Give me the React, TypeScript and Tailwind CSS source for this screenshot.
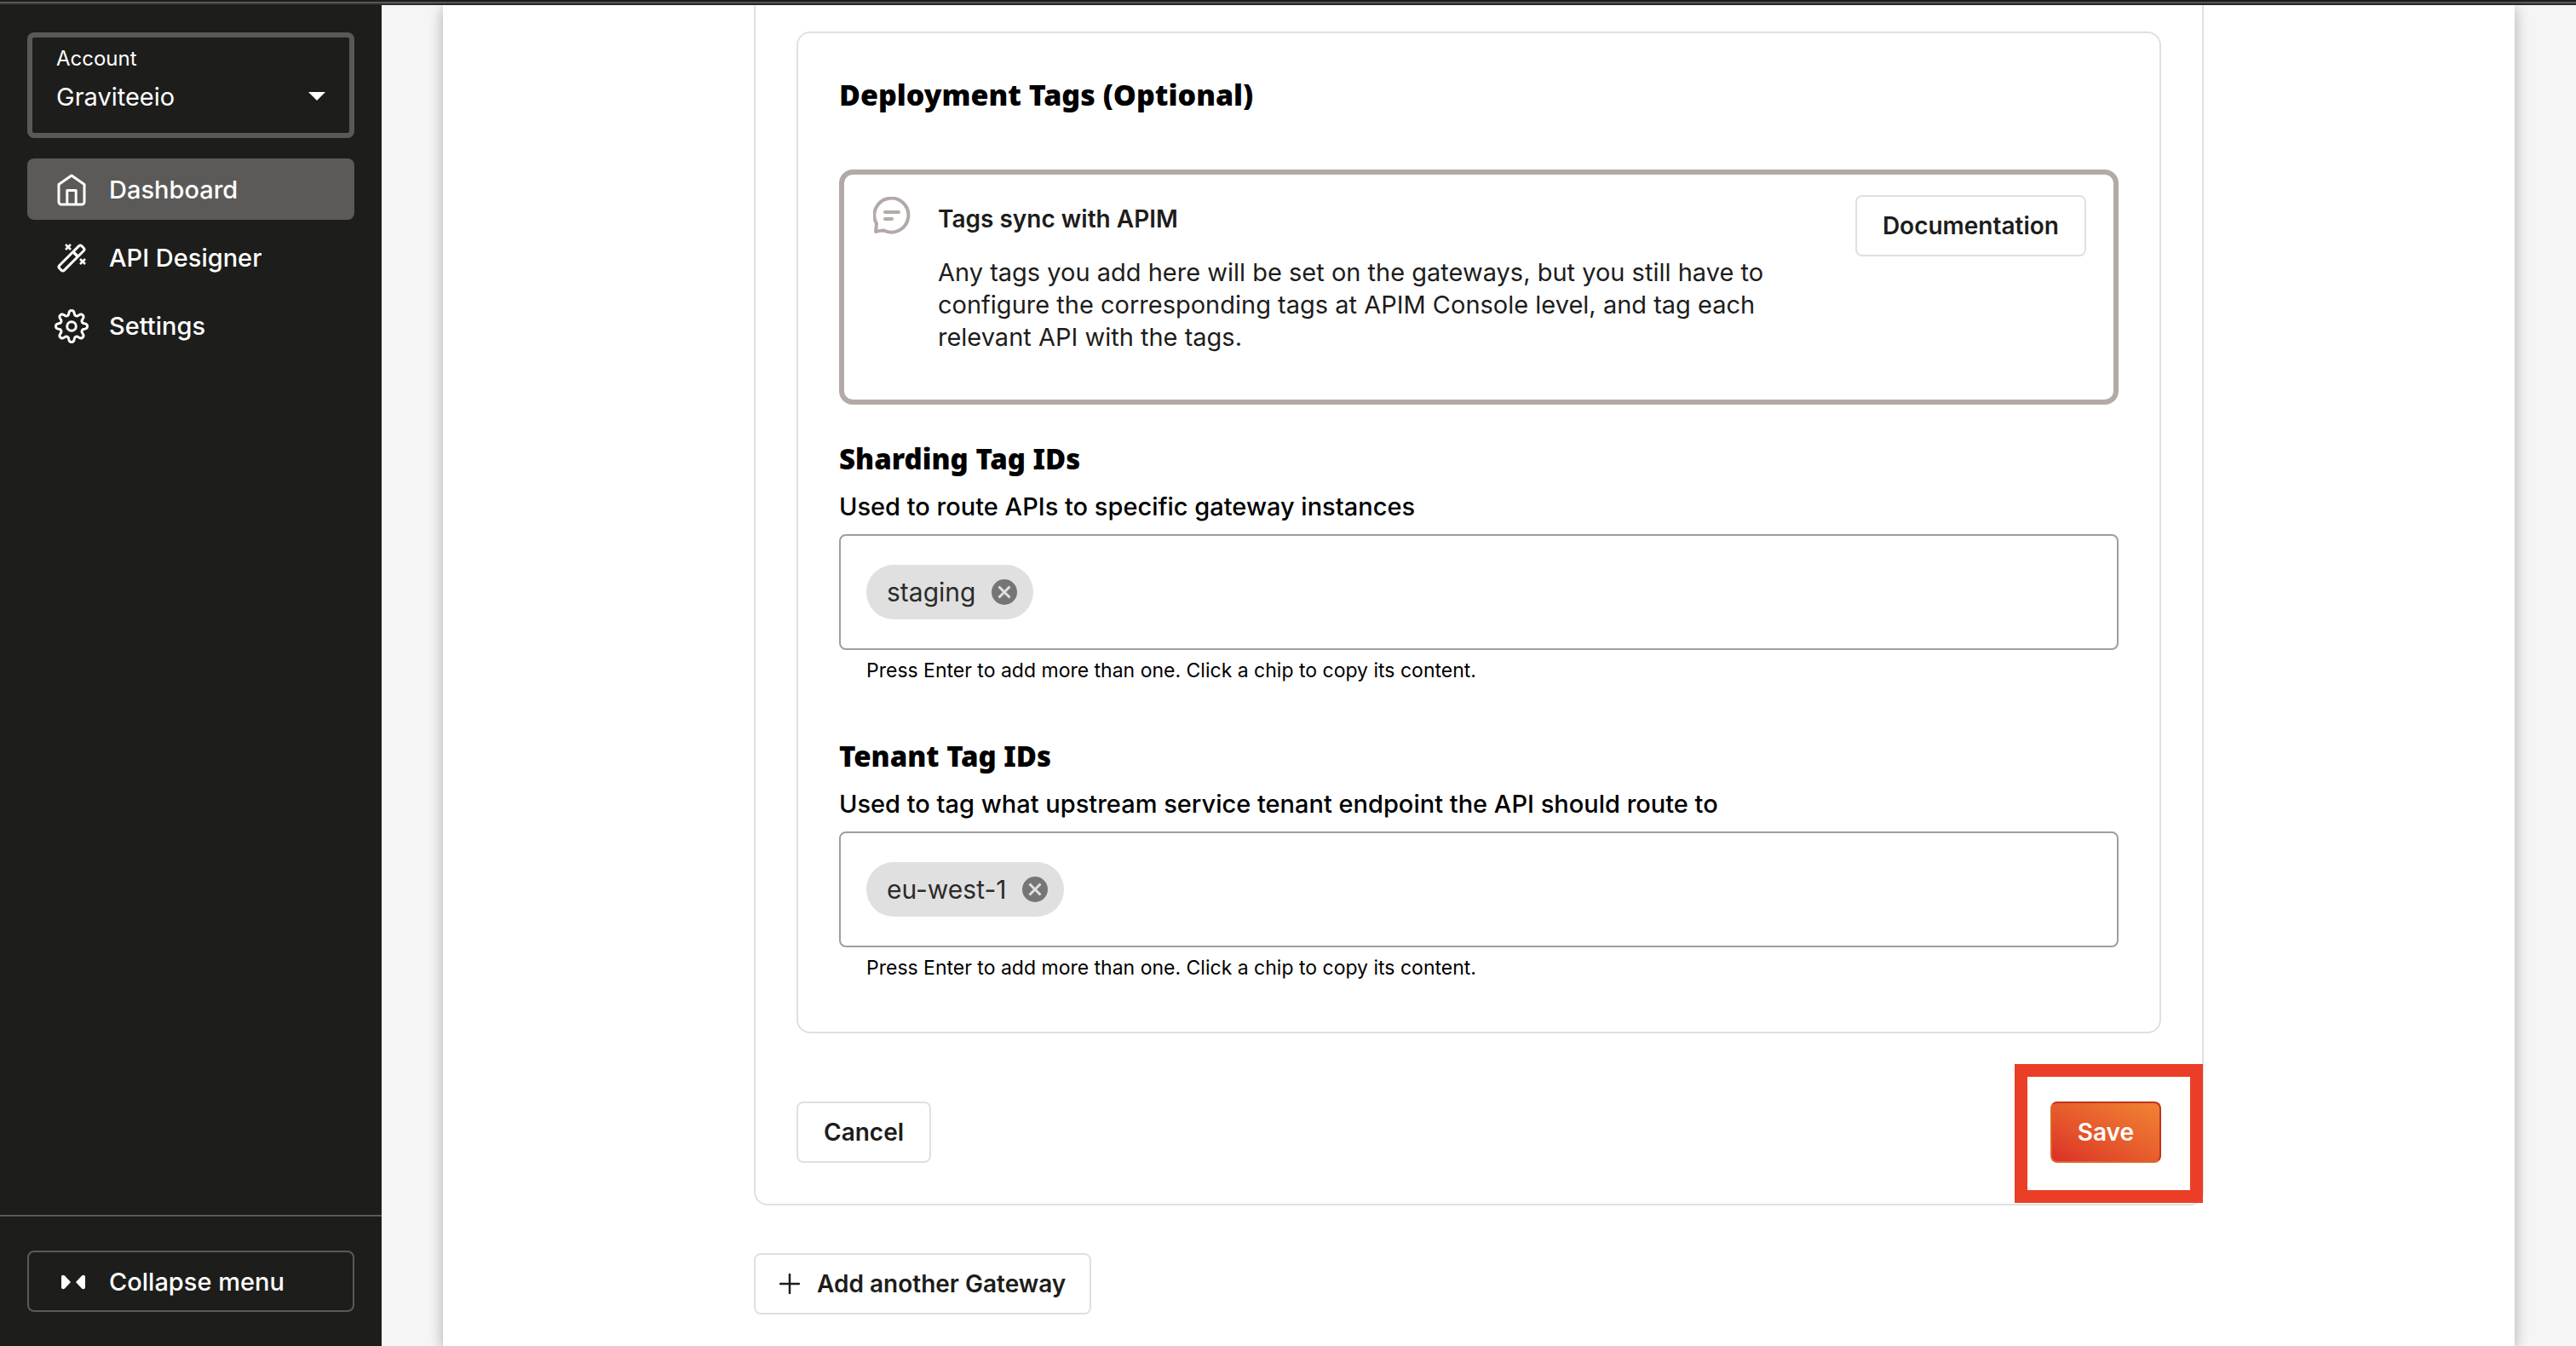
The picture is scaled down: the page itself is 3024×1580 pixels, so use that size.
import React from "react";

const navBase =
  "flex h-[72px] items-center gap-6 rounded-lg px-8 pt-0.5 text-[29px] font-medium text-white";

// Outline of an eight-lobed gear centred in a 40-unit box.
const gearPath =
  Array.from({ length: 160 }, (_, i) => {
    const a = (i / 160) * Math.PI * 2;
    const r = 15.9 + (2.6 * Math.tanh(1.5 * Math.cos(8 * a))) / Math.tanh(1.5);
    return `${i ? "L" : "M"}${(20 + r * Math.cos(a)).toFixed(2)} ${(20 + r * Math.sin(a)).toFixed(2)}`;
  }).join(" ") + " Z";

function HomeIcon() {
  return (
    <svg viewBox="0 0 40 40" className="size-10" fill="none" stroke="currentColor" strokeWidth="3" strokeLinejoin="round" aria-hidden="true">
      <path d="M5 13.500 L20 3 L35 13.500 V34 a3 3 0 0 1 -3 3 H8 a3 3 0 0 1 -3 -3 Z" />
      <path d="M14.800 37 V20.500 H25.200 V37" />
    </svg>
  );
}

function WandIcon() {
  return (
    <svg viewBox="0 0 40 40" className="size-10" fill="none" stroke="currentColor" strokeWidth="3" aria-hidden="true">
      <g transform="rotate(-45 20 20)">
        <rect x="1.500" y="16" width="37" height="8" rx="2.500" />
        <path strokeWidth="3.500" d="M26.500 16 V24" />
      </g>
      <path strokeWidth="2.500" d="M13 4 L19 10 M19 4 L13 10 M30 21 L36 27 M36 21 L30 27" />
    </svg>
  );
}

function GearIcon() {
  return (
    <svg viewBox="0 0 40 40" className="size-10" fill="none" stroke="currentColor" strokeWidth="3" strokeLinejoin="round" aria-hidden="true">
      <circle cx="20" cy="20" r="5.300" />
      <path d={gearPath} />
    </svg>
  );
}

function MessageIcon() {
  return (
    <svg viewBox="0 0 44 44" className="mt-0.5 size-11 shrink-0 text-[#b3aaa8]" fill="none" stroke="currentColor" strokeWidth="4" strokeLinecap="round" strokeLinejoin="round" aria-hidden="true">
      <path d="M3 41 L4 31.500 A20 20 0 1 1 12.500 39.500 Q8 39.500 3 41 Z" />
      <path d="M14 18 H30 M14 26 H22" />
    </svg>
  );
}

function OutlineButton({ children, className = "" }: { children: React.ReactNode; className?: string }) {
  return (
    <button type="button" className={`flex h-[72px] shrink-0 items-center rounded-lg border-2 border-[#e0e0e0] bg-white text-[28px] font-semibold text-[#1d1d1b] ${className}`}>
      {children}
    </button>
  );
}

function TagField({ id, title, description, chip }: { id: string; title: string; description: string; chip: string }) {
  return (
    <section>
      <h3 className="font-['Noto_Sans',sans-serif] text-[33px] leading-[48px] font-black">{title}</h3>
      <label htmlFor={id} className="mt-2 block text-[29px] leading-[48px] font-medium">{description}</label>
      <div className="mt-2 flex h-[136px] items-center gap-4 rounded-lg border-2 border-[#9e9e9e] px-[30px]">
        <span className="flex h-16 items-center gap-[18px] rounded-full bg-[#e0e0e0] pr-[18px] pl-6 text-[30px] text-[#2b2b2a]">
          {chip}
          <button type="button" aria-label={`Remove ${chip}`} className="flex size-8 items-center justify-center">
            <svg viewBox="0 0 32 32" className="size-8" aria-hidden="true">
              <circle cx="16" cy="16" r="15" fill="#757575" />
              <path d="M9.500 9.500 L22.500 22.500 M22.500 9.500 L9.500 22.500" stroke="#e0e0e0" strokeWidth="3" />
            </svg>
          </button>
        </span>
        <input id={id} type="text" className="min-w-0 flex-1 bg-transparent text-[30px] outline-none" />
      </div>
      <p className="mt-2 pl-8 text-[23px] leading-8">Press Enter to add more than one. Click a chip to copy its content.</p>
    </section>
  );
}

export default function App() {
  return (
    <div className="flex h-screen flex-col overflow-hidden bg-[#f5f5f5] font-['Inter',sans-serif] text-black">
      <div className="h-[6px] shrink-0 border-t-2 border-b-2 border-t-[#1d1d1b] border-b-[#2e2a2b] bg-[#5b5a58]" />
      <div className="flex min-h-0 flex-1">
        <aside className="flex w-[448px] shrink-0 flex-col bg-[#1d1d1b] text-white">
          <div className="flex flex-col gap-6 px-8 pt-8">
            <button type="button" className="flex h-[124px] items-start justify-between rounded-lg border-[6px] border-[#5b5858] px-7 pt-2 text-left">
              <span className="flex flex-col">
                <span className="text-[24px] leading-[34px]">Account</span>
                <span className="mt-2 text-[29px] leading-[40px]">Graviteeio</span>
              </span>
              <svg viewBox="0 0 20 10" className="mt-14 h-[10px] w-5" aria-hidden="true">
                <path d="M0 0 H20 L10 10 Z" fill="currentColor" />
              </svg>
            </button>
            <nav className="flex flex-col gap-2">
              <a href="#dashboard" className={`${navBase} bg-[#5b5a58]`}><HomeIcon />Dashboard</a>
              <a href="#designer" className={navBase}><WandIcon />API Designer</a>
              <a href="#settings" className={navBase}><GearIcon />Settings</a>
            </nav>
          </div>
          <div className="mt-auto border-t-2 border-[#5b5a58] px-8 pt-10 pb-10">
            <button type="button" className="flex h-[72px] w-full items-center gap-7 rounded-lg border-2 border-[#5b5a58] pt-0.5 pl-[38px] text-[29px] font-medium">
              <svg viewBox="0 0 28 18" className="h-[18px] w-7" fill="currentColor" aria-hidden="true">
                <path d="M0 3 C0 1 2 0 4 1.500 L11 9 L4 16.500 C2 18 0 17 0 15 Z M28 3 C28 1 26 0 24 1.500 L17 9 L24 16.500 C26 18 28 17 28 15 Z" />
              </svg>
              Collapse menu
            </button>
          </div>
        </aside>
        <main className="mx-[72px] flex min-w-0 flex-1 flex-col items-center bg-white shadow-[0_4px_16px_rgba(0,0,0,0.3)]">
          <div className="w-full max-w-[1702px]">
            <div className="rounded-b-2xl border-2 border-t-0 border-[#e0e0e0] px-12 pt-[31px] pb-12">
              <div className="rounded-2xl border-2 border-[#e0e0e0] px-12 pt-12 pb-[59px]">
                <h2 className="font-['Noto_Sans',sans-serif] text-[34px] leading-[48px] font-black">Deployment Tags (Optional)</h2>
                <div className="mt-16 flex h-[276px] items-start rounded-2xl border-[6px] border-[#b3aaa8] pt-6 pr-8 pl-[34px]">
                  <MessageIcon />
                  <div className="ml-8 max-w-[1000px] flex-1 pt-2 text-[29px] text-[#1d1d1b]">
                    <h3 className="text-[28px] leading-[40px] font-semibold">Tags sync with APIM</h3>
                    <p className="mt-6 leading-[38px]">
                      Any tags you add here will be set on the gateways, but you still have to configure the corresponding tags at APIM Console level, and tag each relevant API with the tags.
                    </p>
                  </div>
                  <OutlineButton className="ml-auto px-[30px]">Documentation</OutlineButton>
                </div>
                <div className="mt-10 flex flex-col gap-[61px]">
                  <TagField id="sharding" title="Sharding Tag IDs" description="Used to route APIs to specific gateway instances" chip="staging" />
                  <TagField id="tenant" title="Tenant Tag IDs" description="Used to tag what upstream service tenant endpoint the API should route to" chip="eu-west-1" />
                </div>
              </div>
              <div className="mt-20 flex items-center justify-between">
                <OutlineButton className="px-[30px]">Cancel</OutlineButton>
                <div className="relative">
                  <button type="button" className="flex h-[72px] items-center rounded-lg border-2 border-t-[#c0321f] border-r-[#c0321f] border-b-[#d96a2a] border-l-[#d96a2a] bg-linear-to-tr from-[#dc2c27] to-[#f08332] px-[30px] text-[28px] font-semibold text-white">Save</button>
                  <div className="pointer-events-none absolute -top-[44px] -right-[49px] -bottom-[47px] -left-[42px] border-[15px] border-[#ea3f26]" />
                </div>
              </div>
            </div>
            <OutlineButton className="mt-14 gap-5 px-7">
              <svg viewBox="0 0 24 24" className="size-6" stroke="currentColor" strokeWidth="2.500" strokeLinecap="round" aria-hidden="true">
                <path d="M12 1 V23 M1 12 H23" />
              </svg>
              Add another Gateway
            </OutlineButton>
          </div>
        </main>
      </div>
    </div>
  );
}
